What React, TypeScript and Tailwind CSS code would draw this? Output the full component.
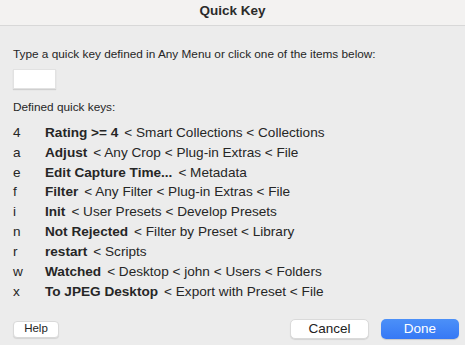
const font = { fontFamily: '"Liberation Sans", Arial, sans-serif' };

const quickKeys = [
  { key: "4", name: "Rating >= 4", path: "< Smart Collections < Collections" },
  { key: "a", name: "Adjust", path: "< Any Crop < Plug-in Extras < File" },
  { key: "e", name: "Edit Capture Time...", path: "< Metadata" },
  { key: "f", name: "Filter", path: "< Any Filter < Plug-in Extras < File" },
  { key: "i", name: "Init", path: "< User Presets < Develop Presets" },
  { key: "n", name: "Not Rejected", path: "< Filter by Preset < Library" },
  { key: "r", name: "restart", path: "< Scripts" },
  { key: "w", name: "Watched", path: "< Desktop < john < Users < Folders" },
  { key: "x", name: "To JPEG Desktop", path: "< Export with Preset < File" },
];

export default function App() {
  return (
    <div
      className="w-[465px] h-[345px] bg-[#ececec] text-[#262626] flex flex-col overflow-hidden"
      style={font}
    >
      {/* title bar */}
      <div className="h-[26px] shrink-0 bg-[#f3f2f1] border-b border-[#d8d8d8] flex items-center justify-center">
        <span className="text-[13.5px] font-bold text-[#2b2b2b] -mt-[2px]">Quick Key</span>
      </div>

      <div className="flex flex-col px-[13px] pt-[20px]">
        <p className="text-[11.8px] leading-[16px]">
          Type a quick key defined in Any Menu or click one of the items below:
        </p>
        <input
          className="mt-[7px] w-[43px] h-[20px] bg-white border border-[#e2e2e2] shadow-[0_1px_1px_rgba(0,0,0,0.12)] outline-none"
          type="text"
        />
        <p className="mt-[10px] text-[11.8px] leading-[16px]">Defined quick keys:</p>

        <div className="mt-[8px] flex flex-col">
          {quickKeys.map((qk) => (
            <div key={qk.key} className="flex items-center h-[19.9px] text-[13.6px] cursor-default">
              <span className="w-[32px] shrink-0">{qk.key}</span>
              <span className="font-bold">{qk.name}</span>
              <span className="ml-[6px]">{qk.path}</span>
            </div>
          ))}
        </div>
      </div>

      <div className="mt-auto mb-[6px] pl-[13px] pr-[6px] flex items-center">
        <button className="w-[46px] h-[17px] bg-white rounded-[4px] border border-[#d9d9d9] shadow-[0_1px_1px_rgba(0,0,0,0.1)] text-[11.5px] text-[#222] leading-none">
          Help
        </button>
        <div className="ml-auto flex gap-[12px]">
          <button className="w-[79px] h-[20px] bg-white rounded-[5px] border border-[#dadada] shadow-[0_1px_1px_rgba(0,0,0,0.1)] text-[13.5px] text-[#222] leading-none">
            Cancel
          </button>
          <button className="w-[78px] h-[20px] rounded-[5px] bg-gradient-to-b from-[#4c90f8] to-[#3678f5] shadow-[0_1px_1px_rgba(0,0,0,0.15)] text-[13.5px] text-white leading-none">
            Done
          </button>
        </div>
      </div>
    </div>
  );
}
